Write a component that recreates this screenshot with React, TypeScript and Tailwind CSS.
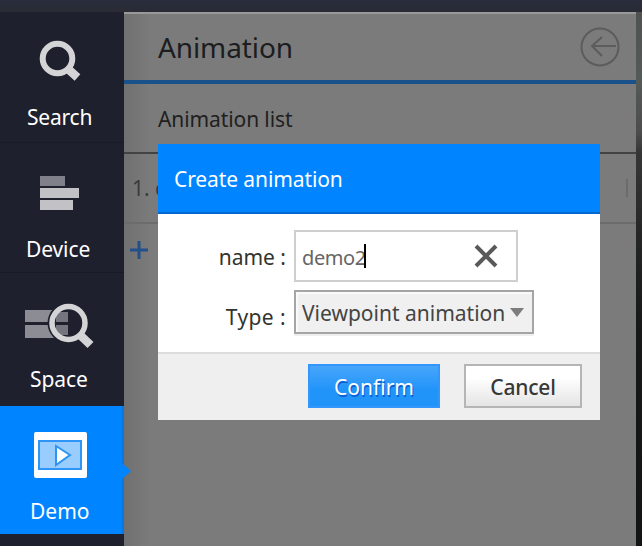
import type { ReactNode } from "react";

function SearchIcon() {
  return (
    <svg className="block h-[44px] w-[46px]" viewBox="0 0 46 44" fill="none">
      <path d="M29.5 28.5L39.5 37.5" stroke="#d4d4d6" strokeWidth="8.5" />
      <circle cx="19.5" cy="18.5" r="14.8" stroke="#d4d4d6" strokeWidth="6" />
    </svg>
  );
}

function DeviceIcon() {
  return (
    <svg className="block h-[36px] w-[42px]" viewBox="0 0 42 36">
      <path fill="#7f808a" d="M1 0h25v10H1z" />
      <path fill="#c1c1c6" d="M1 12h39v10H1zM1 24h33v10H1z" />
    </svg>
  );
}

function SpaceIcon() {
  return (
    <svg className="block h-[50px] w-[74px]" viewBox="0 0 74 50" fill="none">
      <path fill="#8b8c94" d="M1 7h43v12H1zM1 22h43v13H1z" />
      <circle cx="44" cy="20" r="20.5" fill="#1f202d" />
      <path fill="#74757e" d="M32 9h12v10H32zM32 22h12v10H32z" />
      <path d="M55 31L66.5 42" stroke="#d4d4d6" strokeWidth="8.5" />
      <circle cx="44.5" cy="20" r="16.5" stroke="#d4d4d6" strokeWidth="5.5" />
    </svg>
  );
}

function DemoIcon() {
  return (
    <svg className="block h-[46px] w-[54px]" viewBox="0 0 54 46">
      <rect x="0" y="0" width="53" height="46" rx="2" fill="#fff" />
      <rect x="5" y="9" width="42" height="28" fill="#99cdff" stroke="#2e94f5" strokeWidth="2" />
      <path d="M22 14v19l14-10z" fill="#fff" stroke="#2e94f5" strokeWidth="2" />
    </svg>
  );
}

function NavItem({ className, icon, label }: { className: string; icon: ReactNode; label: ReactNode }) {
  return (
    <div className={className}>
      <div className="flex h-[46px] w-full items-start">{icon}</div>
      <div className="text-[21px] leading-[28px] text-white">{label}</div>
    </div>
  );
}

function Sidebar() {
  return (
    <nav className="flex w-[124px] shrink-0 flex-col bg-[#1f202d]">
      <NavItem
        className="h-[131px] border-b border-[#191a25] pt-[28px]"
        icon={<div className="pl-[38px]"><SearchIcon /></div>}
        label={<span className="ml-[27px] mt-[17px] inline-block tracking-[-0.2px]">Search</span>}
      />
      <NavItem
        className="h-[130px] border-b border-[#191a25] pt-[33px]"
        icon={<div className="pl-[39px]"><DeviceIcon /></div>}
        label={<span className="ml-[26px] mt-[13px] inline-block tracking-[-0.1px]">Device</span>}
      />
      <NavItem
        className="h-[133px] pt-[30px]"
        icon={<div className="pl-[24px]"><SpaceIcon /></div>}
        label={<span className="ml-[30px] mt-[16px] inline-block tracking-[-0.1px]">Space</span>}
      />
      <NavItem
        className="relative h-[128px] border-r-2 border-[#0878df] bg-[#0084ff] pt-[26px]"
        icon={<div className="pl-[34px]"><DemoIcon /></div>}
        label={<span className="ml-[30px] mt-[19px] inline-block">Demo</span>}
      />
    </nav>
  );
}

function AnimationPanel() {
  return (
    <main className="flex w-[512px] shrink-0 flex-col border-t-2 border-[#999] bg-[linear-gradient(90deg,#707070_0,#7b7b7b_26px,#7b7b7b_100%)] text-[#1f1f1f]">
      <header className="flex h-[70px] items-center justify-between border-b-4 border-[#19528a] pl-[34px] pr-[15px]">
        <h1 className="text-[28px] leading-[40px] tracking-[-0.1px] text-[#1c1d20]">Animation</h1>
        <svg className="block h-[42px] w-[42px]" viewBox="0 0 42 42" fill="none" stroke="#5c5c5c" strokeWidth="2">
          <circle cx="21" cy="21" r="18.5" />
          <path d="M37 20H13M23 11L13 20L23 30" />
        </svg>
      </header>
      <div className="flex h-[70px] items-center border-b-2 border-[#434343] pl-[34px] pt-[3px] text-[21px] tracking-[-0.1px]">
        Animation list
      </div>
      <div className="flex h-[70px] items-center justify-between border-b-2 border-[#6c6c6c] pl-[8px] pr-[8px] text-[21px] text-[#3b3b3b]">
        <span className="pt-[2px]">1. c</span>
        <span className="h-[18px] w-[2px] bg-[#6b6b6b]" />
      </div>
      <div className="flex h-[51px] items-center pl-[6px]">
        <svg className="block h-[18px] w-[18px]" viewBox="0 0 18 18" stroke="#23508a" strokeWidth="3">
          <path d="M0 9H18M9 0V18" />
        </svg>
      </div>
    </main>
  );
}

function CreateDialog() {
  return (
    <section className="absolute left-[158px] top-[144px] flex h-[276px] w-[442px] flex-col bg-white">
      <header className="flex h-[70px] items-center border-b-2 border-[#0068cf] bg-[#0084ff] pl-[16px] pt-[3px] text-[21px] tracking-[-0.1px] text-white">
        Create animation
      </header>
      <div className="flex h-[138px] flex-col gap-2 pt-[16px]">
        <div className="flex h-[52px] items-center">
          <label className="w-[136px] pr-[8px] pt-[3px] text-right text-[21px] text-[#32342e]">name :</label>
          <div className="flex h-[52px] w-[224px] items-center border-2 border-[#cfcfcf] pl-[6px] text-[20px] text-[#666]">
            <span className="w-[62px] whitespace-nowrap pt-[3px] tracking-[-0.4px]">demo2</span>
            <span className="h-[24px] w-[2px] bg-black" />
            <svg className="ml-[108px] block h-[24px] w-[24px]" viewBox="0 0 24 24" stroke="#595959" strokeWidth="4">
              <path d="M2 2L22 22M22 2L2 22" />
            </svg>
          </div>
        </div>
        <div className="flex h-[44px] items-center">
          <label className="w-[136px] pr-[8px] pt-[11px] text-right text-[21px] tracking-[0.4px] text-[#32342e]">Type :</label>
          <div className="flex h-[44px] w-[240px] items-center border-2 border-[#a5a5a5] bg-[#f0f0f0] pl-[6px] text-[21px] text-[#444] shadow-[0_2px_0_#efefef,inset_2px_2px_0_#fafafa]">
            <span className="w-[208px] whitespace-nowrap pt-[3px]">Viewpoint animation</span>
            <svg className="block h-[9px] w-[14px]" viewBox="0 0 14 9" fill="#7d7d7d">
              <path d="M0 0H14L7 9Z" />
            </svg>
          </div>
        </div>
      </div>
      <footer className="flex h-[68px] items-start border-t-2 border-[#ddd] bg-[#efefef] pl-[150px] pt-[10px]">
        <button className="h-[44px] w-[132px] border-2 border-[#3296fa] bg-[linear-gradient(#48a6fb,#2194f9_60%,#2194f9)] pt-[3px] text-[21px] text-white [text-shadow:1px_2px_0_#0961d3]">
          Confirm
        </button>
        <button className="ml-[24px] h-[44px] w-[118px] border-2 border-[#b5b5b5] bg-[linear-gradient(#fff_30%,#e4e4e4)] pt-[3px] text-[21px] font-medium tracking-[-0.2px] text-[#383838]">
          Cancel
        </button>
      </footer>
    </section>
  );
}

export default function App() {
  return (
    <div className="relative flex h-[546px] w-[642px] flex-col overflow-hidden bg-[#1b1d1e] font-['Noto_Sans','Open_Sans',sans-serif]">
      <div className="h-[12px] shrink-0 bg-[linear-gradient(#292c3c,#292c35)]" />
      <div className="flex flex-1">
        <Sidebar />
        <AnimationPanel />
        <aside className="w-[6px] bg-[linear-gradient(#4e534f,#545a56_70px,#4b4d4c_120px,#343638_140px,#242627_220px,#15191a_320px,#111516)]" />
      </div>
      <svg className="absolute left-[122px] top-[463px] h-[16px] w-[10px]" viewBox="0 0 10 16" fill="#0084ff">
        <path d="M0 0L9 8L0 16Z" />
      </svg>
      <CreateDialog />
    </div>
  );
}
